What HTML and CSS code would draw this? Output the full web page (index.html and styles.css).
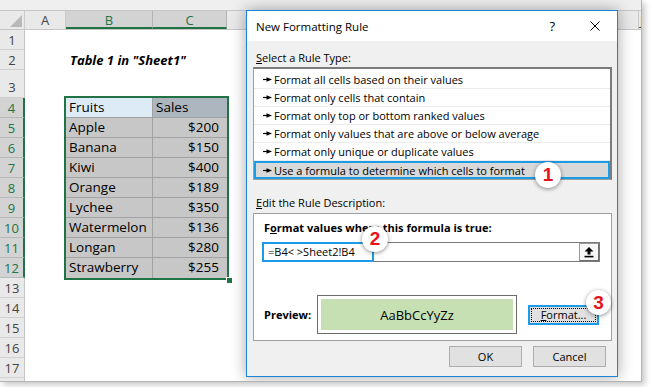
FILE: index.html
```html
<!DOCTYPE html>
<html lang="en">
<head>
  <meta charset="UTF-8" />
  <title>New Formatting Rule</title>
  <link rel="stylesheet" href="styles.css">
</head>
<body>
  <div class="shot">
    <div class="fbar"></div>
    <div class="heads">
      <div class="hc corner">
        <svg width="25" height="18" viewBox="0 0 25 18"><path d="M22 4 V16 H10 Z" fill="#b9b9b9"/></svg>
      </div>
      <div class="hc col-a">A</div>
      <div class="hc col-b sel">B</div>
      <div class="hc col-c sel">C</div>
      <div class="hc col-d"></div>
      <div class="hc col-d"></div>
      <div class="hc col-d"></div>
      <div class="hc col-d"></div>
      <div class="hc col-d"></div>
      <div class="hc col-i"></div>
      <div class="hc col-j">J</div>
    </div>

    <div class="grid">
      <div class="rows">
        <div class="rh">1</div>
        <div class="rh">2</div>
        <div class="rh tall">3</div>
        <div class="rh sel">4</div>
        <div class="rh sel">5</div>
        <div class="rh sel">6</div>
        <div class="rh sel">7</div>
        <div class="rh sel">8</div>
        <div class="rh sel">9</div>
        <div class="rh sel">10</div>
        <div class="rh sel">11</div>
        <div class="rh sel">12</div>
        <div class="rh">13</div>
        <div class="rh">14</div>
        <div class="rh">15</div>
        <div class="rh">16</div>
        <div class="rh">17</div>
        <div class="rh"></div>
      </div>

      <div class="cells">
        <div class="title">Table 1 in "Sheet1"</div>
        <div class="gap3"></div>
        <div class="table">
          <div class="td active">Fruits</div><div class="td head">Sales</div>
          <div class="td">Apple</div><div class="td num">$200</div>
          <div class="td">Banana</div><div class="td num">$150</div>
          <div class="td">Kiwi</div><div class="td num">$400</div>
          <div class="td">Orange</div><div class="td num">$189</div>
          <div class="td">Lychee</div><div class="td num">$350</div>
          <div class="td">Watermelon</div><div class="td num">$136</div>
          <div class="td">Longan</div><div class="td num">$280</div>
          <div class="td last">Strawberry</div><div class="td num last">$255</div>
          <span class="handle"></span>
        </div>
      </div>
    </div>

    <div class="dialog">
      <div class="dlg-title">
        <span class="name">New Formatting Rule</span>
        <span class="help">?</span>
        <svg class="close" width="10" height="10" viewBox="0 0 10 10"><path d="M0.5 0.5 L9.5 9.5 M9.5 0.5 L0.5 9.5" stroke="#000" stroke-width="1"/></svg>
      </div>

      <div class="dlg-body">
        <div class="lbl"><u>S</u>elect a Rule Type:</div>
        <div class="list">
          <div class="item"><svg class="arr" width="9" height="7" viewBox="0 0 9 7"><path d="M0 3.5h5" stroke="#000" stroke-width="1.2"/><path d="M3.5 1.2 L9 3.5 L3.5 5.8 Z"/></svg>Format all cells based on their values</div>
          <div class="item"><svg class="arr" width="9" height="7" viewBox="0 0 9 7"><path d="M0 3.5h5" stroke="#000" stroke-width="1.2"/><path d="M3.5 1.2 L9 3.5 L3.5 5.8 Z"/></svg>Format only cells that contain</div>
          <div class="item"><svg class="arr" width="9" height="7" viewBox="0 0 9 7"><path d="M0 3.5h5" stroke="#000" stroke-width="1.2"/><path d="M3.5 1.2 L9 3.5 L3.5 5.8 Z"/></svg>Format only top or bottom ranked values</div>
          <div class="item"><svg class="arr" width="9" height="7" viewBox="0 0 9 7"><path d="M0 3.5h5" stroke="#000" stroke-width="1.2"/><path d="M3.5 1.2 L9 3.5 L3.5 5.8 Z"/></svg>Format only values that are above or below average</div>
          <div class="item"><svg class="arr" width="9" height="7" viewBox="0 0 9 7"><path d="M0 3.5h5" stroke="#000" stroke-width="1.2"/><path d="M3.5 1.2 L9 3.5 L3.5 5.8 Z"/></svg>Format only unique or duplicate values</div>
          <div class="item sel"><svg class="arr" width="9" height="7" viewBox="0 0 9 7"><path d="M0 3.5h5" stroke="#000" stroke-width="1.2"/><path d="M3.5 1.2 L9 3.5 L3.5 5.8 Z"/></svg>Use a formula to determine which cells to format</div>
        </div>

        <div class="lbl lbl2"><u>E</u>dit the Rule Description:</div>
        <div class="desc">
          <div class="blab">F<u>o</u>rmat values where this formula is true:</div>
          <div class="formula">
            <div class="fx">=B4&lt; &gt;Sheet2!B4</div>
            <div class="ref">
              <svg width="10" height="12" viewBox="0 0 10 12"><path d="M5 1 L9.5 5.5 H6.5 V8.5 H3.5 V5.5 H0.5 Z"/><rect x="0.5" y="9.8" width="9" height="1.6"/></svg>
            </div>
          </div>
          <div class="prev">
            <span class="plab">Preview:</span>
            <div class="pbox"><div class="pin">AaBbCcYyZz</div></div>
            <div class="fmt"><span><u>F</u>ormat...</span></div>
          </div>
        </div>

        <div class="buttons">
          <div class="btn">OK</div>
          <div class="btn">Cancel</div>
        </div>
      </div>

      <span class="badge b1">1</span>
      <span class="badge b2">2</span>
      <span class="badge b3">3</span>
    </div>
  </div>
</body>
</html>
```

FILE: styles.css
```css
* {
  margin: 0;
  padding: 0;
  box-sizing: border-box;
}
body {
  width: 651px;
  height: 387px;
  overflow: hidden;
  background: #ffffff;
  font-family: 'Open Sans', sans-serif;
  color: #000;
}
.shot {
  position: relative;
  width: 642px;
  height: 382px;
  background: #ffffff;
  border-right: 1px solid #b4b4b4;
  border-bottom: 1px solid #b4b4b4;
  box-shadow: 3px 3px 6px rgba(0, 0, 0, 0.22);
  overflow: hidden;
}
.fbar {
  height: 11px;
  background: #efefef;
  border-bottom: 1px solid #c6c6c6;
}

/* column headers */
.heads {
  display: flex;
  height: 19px;
  background: #e9e9e9;
  border-bottom: 1px solid #c6c6c6;
}
.hc {
  flex: none;
  border-right: 1px solid #cbcbcb;
  font-size: 13px;
  line-height: 18px;
  text-align: center;
  color: #444;
}
.hc.corner { width: 25px; }
.col-a { width: 41px; }
.col-b { width: 87px; }
.col-c { width: 74px; }
.col-d { width: 64px; }
.col-i { width: 92px; }
.col-j { flex: 1; text-align: left; padding-left: 1px; border-right: none; }
.hc.sel {
  background: #d3d3d3;
  color: #217346;
  border-bottom: 2px solid #217346;
  border-right-color: #b4b4b4;
}

/* sheet body */
.grid {
  display: flex;
}
.rows {
  width: 25px;
  flex: none;
}
.rh {
  height: 20px;
  background: #e9e9e9;
  border-bottom: 1px solid #d0d0d0;
  border-right: 1px solid #c6c6c6;
  font-size: 13px;
  line-height: 20px;
  text-align: center;
  color: #444;
}
.rh.tall {
  height: 28px;
  line-height: 34px;
}
.rh.sel {
  background: #d3d3d3;
  color: #217346;
  border-right: 2px solid #217346;
  border-bottom-color: #b8b8b8;
}
.cells {
  flex: 1;
}
.title {
  margin-top: 20px;
  height: 20px;
  padding-left: 45px;
  font-size: 13px;
  font-weight: bold;
  font-style: italic;
  line-height: 21px;
}
.gap3 { height: 28px; }
.table {
  position: relative;
  margin-left: 41px;
  width: 161px;
  display: grid;
  grid-template-columns: 87px 74px;
  grid-auto-rows: 20px;
  outline: 2px solid #217346;
}
.td {
  background: #c7c7c7;
  border-bottom: 1px solid #a2a2a2;
  font-size: 13.5px;
  line-height: 19px;
  padding-left: 3px;
}
.td:nth-child(odd) { border-right: 1px solid #a2a2a2; }
.td.num { text-align: right; padding-right: 8px; }
.td.last { border-bottom: none; }
.td.active { background: #ddebf7; }
.td.head { background: #adb5be; }
.handle {
  position: absolute;
  right: -6px;
  bottom: -6px;
  width: 7px;
  height: 7px;
  background: #217346;
  border: 1px solid #fff;
}

/* dialog */
.dialog {
  position: absolute;
  left: 246px;
  top: 10px;
  width: 372px;
  height: 367px;
  border: 1px solid #1883d7;
  background: #f0f0f0;
  box-shadow: 0 0 14px rgba(0, 0, 0, 0.35);
  font-size: 11px;
  display: flex;
  flex-direction: column;
}
.dlg-title {
  height: 30px;
  background: #fff;
  display: flex;
  align-items: center;
  padding-left: 9px;
  font-size: 11.5px;
}
.dlg-title .name { flex: 1; }
.help {
  font-size: 13px;
  margin-right: 35px;
}
.close { margin-right: 17px; }
.dlg-body {
  flex: 1;
  padding: 9px 5px 0 6px;
  display: flex;
  flex-direction: column;
}
.lbl {
  line-height: 16px;
  padding-left: 3px;
}
.list {
  margin-top: 1px;
  height: 113px;
  background: #fff;
  border: 1px solid #a0a0a0;
  border-top: 2px solid #7c7c7c;
  border-right: 2px solid #7c7c7c;
  padding-top: 2px;
}
.item {
  height: 18px;
  display: flex;
  align-items: center;
  padding-left: 9px;
  border-bottom: 1px solid #ececec;
  white-space: nowrap;
}
.item .arr { margin-right: 2px; flex: none; }
.item.sel {
  background: #d9d9d9;
  border-bottom: none;
  box-shadow: inset 0 0 0 2px #1c9be6;
}
.lbl2 { margin-top: 15px; }
.desc {
  margin-top: 2px;
  height: 128px;
  background: #fff;
  border: 1px solid #a0a0a0;
  padding-top: 6px;
}
.blab {
  padding-left: 10px;
  line-height: 16px;
  font-weight: bold;
}
.formula {
  margin: 6px 0 0 8px;
  width: 338px;
  height: 20px;
  border: 1px solid #7a7a7a;
  display: flex;
}
.fx {
  width: 112px;
  margin: -1px 0 -1px -1px;
  border: 2px solid #1c9be6;
  padding-left: 4px;
  line-height: 16px;
  white-space: pre;
}
.ref {
  margin-left: auto;
  width: 20px;
  border: 1px solid #9a9a9a;
  border-right-color: #6e6e6e;
  border-bottom-color: #6e6e6e;
  background: #f7f7f7;
  display: flex;
  align-items: center;
  justify-content: center;
}
.prev {
  margin-top: 33px;
  padding-left: 10px;
  display: flex;
  align-items: center;
}
.plab {
  width: 53px;
  font-weight: bold;
}
.pbox {
  width: 200px;
  height: 39px;
  border: 1px solid #6d6d6d;
  padding: 3px;
}
.pin {
  height: 100%;
  background: #c6e0b4;
  display: flex;
  align-items: center;
  justify-content: center;
  font-size: 13px;
}
.fmt {
  margin-left: 11px;
  width: 71px;
  height: 20px;
  border: 2px solid #1c9be6;
  background: #e1e1e1;
  display: flex;
  align-items: center;
  justify-content: center;
  outline: 1px dotted #000;
  outline-offset: -4px;
}
.buttons {
  margin-top: 5px;
  padding-right: 6px;
  display: flex;
  justify-content: flex-end;
  gap: 11px;
}
.btn {
  width: 73px;
  height: 21px;
  border: 1px solid #adadad;
  background: #e1e1e1;
  line-height: 19px;
  text-align: center;
}
.badge {
  position: absolute;
  width: 26px;
  height: 26px;
  border-radius: 50%;
  background: #fff;
  box-shadow: 0 1px 4px rgba(0, 0, 0, 0.45);
  color: #e5131b;
  font-family: 'Liberation Sans', sans-serif;
  font-weight: bold;
  font-size: 19px;
  display: flex;
  align-items: center;
  justify-content: center;
}
.b1 { left: 288px; top: 151px; }
.b2 { left: 115px; top: 215px; }
.b3 { left: 339px; top: 279px; width: 25px; height: 25px; }
```
